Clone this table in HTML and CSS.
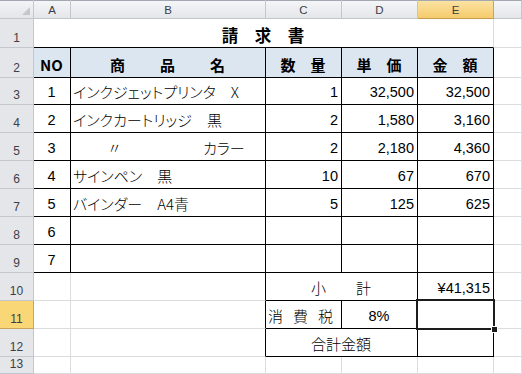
FILE: index.html
```html
<!DOCTYPE html>
<html lang="ja">
<head>
<meta charset="utf-8">
<title>請求書</title>
<link rel="stylesheet" href="styles.css">
</head>
<body>
<div class="sheet">
  <div class="corner"><span class="tri"></span></div>
  <div class="ch">A</div>
  <div class="ch">B</div>
  <div class="ch">C</div>
  <div class="ch">D</div>
  <div class="ch sel">E</div>
  <div class="ch"></div>

  <div class="rh">1</div>
  <div class="c title span5 bb">請　求　書</div>
  <div class="c"></div>

  <div class="rh">2</div>
  <div class="c hd ctr br bb">NO</div>
  <div class="c hd ctr br bb"><span class="spread"><span>商</span><span>品</span><span>名</span></span></div>
  <div class="c hd ctr br bb">数　量</div>
  <div class="c hd ctr br bb">単　価</div>
  <div class="c hd ctr br bb">金　額</div>
  <div class="c"></div>

  <div class="rh">3</div>
  <div class="c num ctr br bb">1</div>
  <div class="c lt br bb">インクジェットプリンタ　X</div>
  <div class="c num rt br bb">1</div>
  <div class="c num rt br bb">32,500</div>
  <div class="c num rt br bb">32,500</div>
  <div class="c"></div>

  <div class="rh">4</div>
  <div class="c num ctr br bb">2</div>
  <div class="c lt br bb">インクカートリッジ　黒</div>
  <div class="c num rt br bb">2</div>
  <div class="c num rt br bb">1,580</div>
  <div class="c num rt br bb">3,160</div>
  <div class="c"></div>

  <div class="rh">5</div>
  <div class="c num ctr br bb">3</div>
  <div class="c lt br bb"><span class="ditto">〃</span><span>カラー</span></div>
  <div class="c num rt br bb">2</div>
  <div class="c num rt br bb">2,180</div>
  <div class="c num rt br bb">4,360</div>
  <div class="c"></div>

  <div class="rh">6</div>
  <div class="c num ctr br bb">4</div>
  <div class="c lt br bb">サインペン　黒</div>
  <div class="c num rt br bb">10</div>
  <div class="c num rt br bb">67</div>
  <div class="c num rt br bb">670</div>
  <div class="c"></div>

  <div class="rh">7</div>
  <div class="c num ctr br bb">5</div>
  <div class="c lt br bb">バインダー　A4青</div>
  <div class="c num rt br bb">5</div>
  <div class="c num rt br bb">125</div>
  <div class="c num rt br bb">625</div>
  <div class="c"></div>

  <div class="rh">8</div>
  <div class="c num ctr br bb">6</div>
  <div class="c br bb"></div>
  <div class="c br bb"></div>
  <div class="c br bb"></div>
  <div class="c br bb"></div>
  <div class="c"></div>

  <div class="rh">9</div>
  <div class="c num ctr br bb">7</div>
  <div class="c br bb"></div>
  <div class="c br bb"></div>
  <div class="c br bb"></div>
  <div class="c br bb"></div>
  <div class="c"></div>

  <div class="rh">10</div>
  <div class="c"></div>
  <div class="c br"></div>
  <div class="c span2 ctr br bb">小　　計</div>
  <div class="c num rt br bb">¥41,315</div>
  <div class="c"></div>

  <div class="rh sel">11</div>
  <div class="c"></div>
  <div class="c br"></div>
  <div class="c lt br bb"><span class="tax"><span>消</span><span>費</span><span>税</span></span></div>
  <div class="c num ctr br bb">8%</div>
  <div class="c br bb"></div>
  <div class="c"></div>

  <div class="rh">12</div>
  <div class="c"></div>
  <div class="c br"></div>
  <div class="c span2 ctr br bb">合計金額</div>
  <div class="c br bb"></div>
  <div class="c"></div>

  <div class="rh">13</div>
  <div class="c"></div>
  <div class="c"></div>
  <div class="c"></div>
  <div class="c"></div>
  <div class="c"></div>
  <div class="c"></div>

  <div class="selection"><span class="handle"></span></div>
</div>
</body>
</html>
```

FILE: styles.css
```css
html, body {
  margin: 0;
  padding: 0;
  background: #ffffff;
}

.sheet {
  position: relative;
  display: grid;
  grid-template-columns: 34px 37px 195px 76px 76px 76px 28px;
  grid-template-rows: 19px 29px 30px 27px repeat(9, 28px) 17px;
  width: 522px;
  height: 374px;
  overflow: hidden;
  background: #ffffff;
  font-family: "Noto Sans CJK JP", "Liberation Sans", sans-serif;
  color: #000000;
}

.corner {
  position: relative;
  background: linear-gradient(#f4f5f7, #e3e5e9);
  border-right: 1px solid #c3c7cd;
  border-bottom: 1px solid #c3c7cd;
  box-shadow: inset 0 1px 0 #a3a8b0;
  box-sizing: border-box;
}

.tri {
  position: absolute;
  right: 3px;
  bottom: 3px;
  width: 0;
  height: 0;
  border-left: 8px solid transparent;
  border-bottom: 8px solid #c4c8cd;
}

.ch {
  display: flex;
  justify-content: center;
  align-items: center;
  padding-top: 2px;
  box-sizing: border-box;
  background: linear-gradient(#f5f6f8, #e4e6ea);
  border-right: 1px solid #c3c7cd;
  border-bottom: 1px solid #c3c7cd;
  box-shadow: inset 0 1px 0 #a3a8b0;
  font-family: "Liberation Sans", sans-serif;
  font-size: 11.5px;
  color: #3c4046;
}

.ch.sel {
  background: linear-gradient(#fbe4a6, #f5cb6c);
  border-right-color: #c9a55a;
  border-bottom-color: #c59c4a;
}

.rh {
  display: flex;
  justify-content: center;
  align-items: flex-end;
  padding-bottom: 2px;
  box-sizing: border-box;
  background: #e4e6ea;
  border-right: 1px solid #c3c7cd;
  border-bottom: 1px solid #c3c7cd;
  font-family: "Liberation Sans", sans-serif;
  font-size: 12px;
  color: #3c4046;
}

.rh.sel {
  background: #f9d676;
  border-bottom-color: #c9a55a;
  border-right-color: #c9a55a;
}

.c {
  display: flex;
  align-items: flex-end;
  padding: 0 3px 3px 2px;
  box-sizing: border-box;
  border-right: 1px solid #dadcdd;
  border-bottom: 1px solid #dadcdd;
  font-size: 15px;
  font-weight: 300;
  line-height: 18px;
  white-space: pre;
  overflow: hidden;
  font-feature-settings: "palt";
}

.br { border-right-color: #000000; }
.bb { border-bottom-color: #000000; }

.ctr { justify-content: center; }
.rt { justify-content: flex-end; }
.lt { justify-content: flex-start; }

.span5 { grid-column: span 5; }
.span2 { grid-column: span 2; }

.title {
  justify-content: center;
  font-size: 16.5px;
  font-weight: 700;
  padding-bottom: 3px;
  font-feature-settings: normal;
}

.hd {
  background: #dce6f1;
  font-weight: 700;
  font-feature-settings: normal;
}

.num {
  font-family: "Liberation Sans", sans-serif;
  font-weight: 400;
  font-size: 14.5px;
}

.spread {
  display: flex;
  gap: 35px;
}

.tax {
  display: flex;
  gap: 10px;
}

.ditto {
  margin-left: 34px;
  width: 96px;
}

.selection {
  position: absolute;
  left: 416px;
  top: 299px;
  width: 79px;
  height: 31px;
  box-sizing: border-box;
  border: 2px solid #1c1c1c;
}

.handle {
  position: absolute;
  right: -5px;
  bottom: -5px;
  width: 5px;
  height: 5px;
  background: #1c1c1c;
  border: 1px solid #ffffff;
}
```
